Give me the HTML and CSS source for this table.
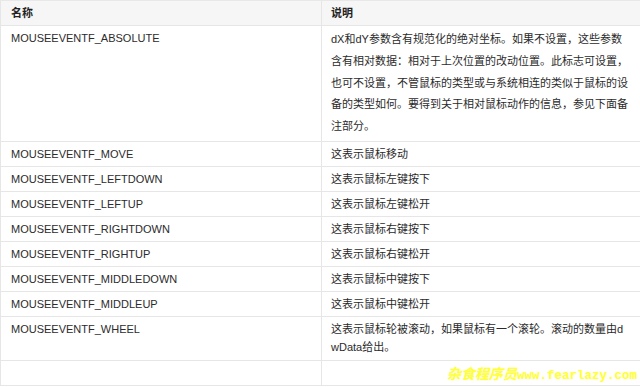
FILE: index.html
```html
<!DOCTYPE html>
<html lang="zh-CN">
<head>
<meta charset="utf-8">
<title>MOUSEEVENTF</title>
<link rel="stylesheet" href="styles.css">
</head>
<body>
<div class="page">
  <table class="events">
    <colgroup>
      <col class="col-name">
      <col class="col-desc">
    </colgroup>
    <thead>
      <tr>
        <th class="name">名称</th>
        <th class="desc">说明</th>
      </tr>
    </thead>
    <tbody>
      <tr>
        <td class="name">MOUSEEVENTF_ABSOLUTE</td>
        <td class="desc long">dX和dY参数含有规范化的绝对坐标。如果不设置，这些参数含有相对数据：相对于上次位置的改动位置。此标志可设置，也可不设置，不管鼠标的类型或与系统相连的类似于鼠标的设备的类型如何。要得到关于相对鼠标动作的信息，参见下面备注部分。</td>
      </tr>
      <tr><td class="name">MOUSEEVENTF_MOVE</td><td class="desc">这表示鼠标移动</td></tr>
      <tr><td class="name">MOUSEEVENTF_LEFTDOWN</td><td class="desc">这表示鼠标左键按下</td></tr>
      <tr><td class="name">MOUSEEVENTF_LEFTUP</td><td class="desc">这表示鼠标左键松开</td></tr>
      <tr><td class="name">MOUSEEVENTF_RIGHTDOWN</td><td class="desc">这表示鼠标右键按下</td></tr>
      <tr><td class="name">MOUSEEVENTF_RIGHTUP</td><td class="desc">这表示鼠标右键松开</td></tr>
      <tr><td class="name">MOUSEEVENTF_MIDDLEDOWN</td><td class="desc">这表示鼠标中键按下</td></tr>
      <tr><td class="name">MOUSEEVENTF_MIDDLEUP</td><td class="desc">这表示鼠标中键松开</td></tr>
      <tr>
        <td class="name">MOUSEEVENTF_WHEEL</td>
        <td class="desc wrap">这表示鼠标轮被滚动，如果鼠标有一个滚轮。滚动的数量由dwData给出。</td>
      </tr>
      <tr><td class="name empty"></td><td class="desc empty"></td></tr>
    </tbody>
  </table>
  <div class="watermark"><span class="wm-cn">杂食程序员</span><span class="wm-en">www.fearlazy.com</span></div>
</div>
</body>
</html>
```

FILE: styles.css
```css
html, body {
  margin: 0;
  padding: 0;
  background: #ffffff;
  overflow: hidden;
}

.page {
  position: relative;
  width: 640px;
  height: 387px;
  overflow: hidden;
  font-family: "Liberation Sans", Arial, "Noto Sans CJK SC", sans-serif;
  font-size: 11px;
  color: #2b2b2b;
}

.events {
  width: 640px;
  table-layout: fixed;
  border-collapse: separate;
  border-spacing: 0;
  border-top: 1px solid #e8e8e8;
}

.col-name { width: 321px; }
.col-desc { width: 319px; }

.events th,
.events td {
  padding: 3px 11px 3px 9px;
  line-height: 18px;
  text-align: left;
  vertical-align: top;
  border-bottom: 1px solid #e6e6e6;
  border-left: 1px solid #e6e6e6;
  word-break: break-all;
}

.events th.name,
.events td.name {
  padding-left: 10px;
  padding-right: 10px;
}

.events thead th {
  background: #f6f6f6;
  font-weight: bold;
  color: #222222;
}

.events td.long {
  line-height: 21.8px;
}

.events td.wrap {
  line-height: 18.5px;
}

.events td.empty {
  height: 18px;
}

.watermark {
  position: absolute;
  right: 3px;
  bottom: 3px;
  display: flex;
  align-items: baseline;
  color: #ffff3a;
  font-weight: bold;
  text-shadow: 0 0 2px #fdfdc8;
}

.wm-cn {
  font-family: "Noto Sans CJK SC", sans-serif;
  font-size: 14px;
  line-height: 15px;
  font-style: italic;
}

.wm-en {
  font-family: "Liberation Mono", "Courier New", monospace;
  font-size: 12.5px;
  line-height: 15px;
}
```
